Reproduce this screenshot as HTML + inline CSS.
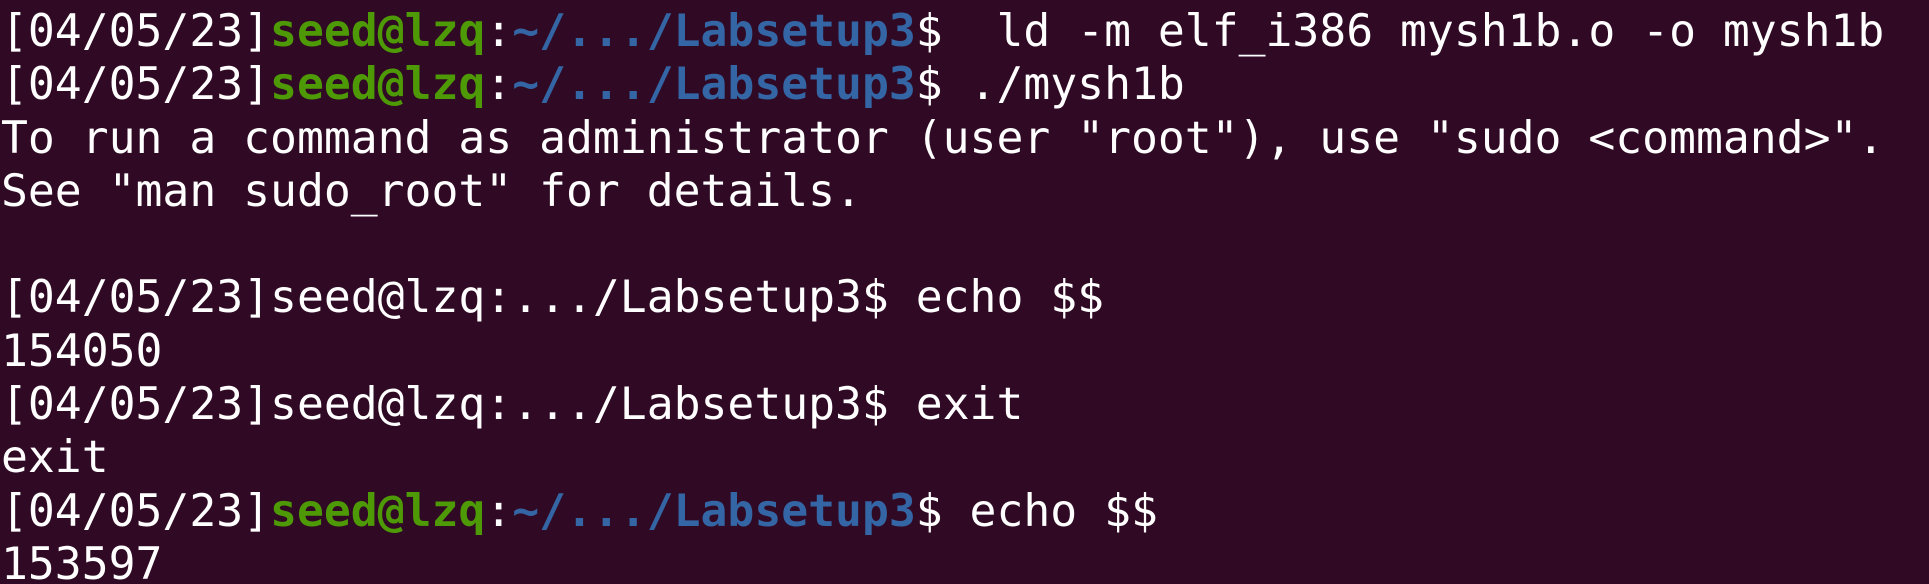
<!DOCTYPE html>
<html><head><meta charset="utf-8"><style>
html,body{margin:0;padding:0;background:#300a24;width:1929px;height:584px;overflow:hidden}
pre{margin:0;padding:5px 0 0 1px;font-family:"DejaVu Sans Mono","Liberation Mono",monospace;font-size:44.7px;line-height:53.3px;color:#ffffff;white-space:pre}
.g{color:#4e9a06;font-weight:bold}
.b{color:#3465a4;font-weight:bold}
</style></head><body><pre>[04/05/23]<span class="g">seed@lzq</span>:<span class="b">~/.../Labsetup3</span>$  ld -m elf_i386 mysh1b.o -o mysh1b
[04/05/23]<span class="g">seed@lzq</span>:<span class="b">~/.../Labsetup3</span>$ ./mysh1b
To run a command as administrator (user "root"), use "sudo &lt;command&gt;".
See "man sudo_root" for details.

[04/05/23]seed@lzq:.../Labsetup3$ echo $$
154050
[04/05/23]seed@lzq:.../Labsetup3$ exit
exit
[04/05/23]<span class="g">seed@lzq</span>:<span class="b">~/.../Labsetup3</span>$ echo $$
153597</pre></body></html>
